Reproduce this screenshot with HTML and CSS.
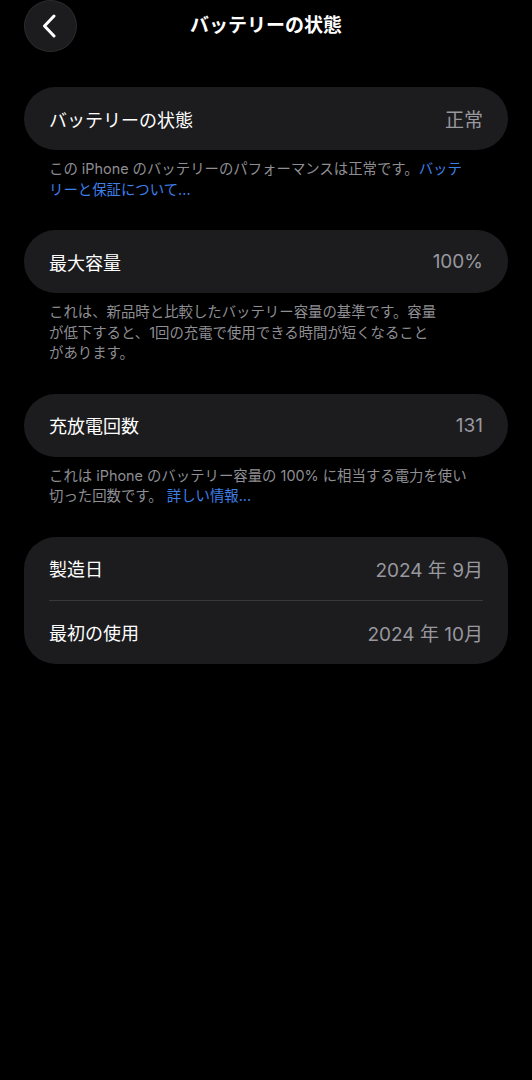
FILE: index.html
```html
<!DOCTYPE html>
<html lang="ja">
<head>
<meta charset="utf-8">
<title>バッテリーの状態</title>
<link rel="stylesheet" href="styles.css">
</head>
<body>
<div class="screen">
  <header class="nav">
    <div class="nav-side">
      <button class="back" aria-label="戻る">
        <svg width="14" height="24" viewBox="0 0 14 24" fill="none">
          <path d="M12 2 L2.5 12 L12 22" stroke="#fff" stroke-width="3" stroke-linecap="round" stroke-linejoin="round"/>
        </svg>
      </button>
    </div>
    <h1 class="title">バッテリーの状態</h1>
    <div class="nav-side"></div>
  </header>

  <main class="content">
    <section class="group">
      <div class="card">
        <div class="row"><span class="label">バッテリーの状態</span><span class="value">正常</span></div>
      </div>
      <p class="note">この iPhone のバッテリーのパフォーマンスは正常です。<a class="link">バッテ<br>リーと保証について...</a></p>
    </section>

    <section class="group">
      <div class="card">
        <div class="row"><span class="label">最大容量</span><span class="value">100%</span></div>
      </div>
      <p class="note">これは、新品時と比較したバッテリー容量の基準です。容量<br>が低下すると、1回の充電で使用できる時間が短くなること<br>があります。</p>
    </section>

    <section class="group">
      <div class="card">
        <div class="row"><span class="label">充放電回数</span><span class="value">131</span></div>
      </div>
      <p class="note">これは iPhone のバッテリー容量の 100% に相当する電力を使い<br>切った回数です。 <a class="link">詳しい情報...</a></p>
    </section>

    <section class="group">
      <div class="card card-list">
        <div class="row"><span class="label">製造日</span><span class="value">2024 年 9月</span></div>
        <div class="divider"></div>
        <div class="row"><span class="label">最初の使用</span><span class="value">2024 年 10月</span></div>
      </div>
    </section>
  </main>
</div>
</body>
</html>
```

FILE: styles.css
```css
* { box-sizing: border-box; }
html, body {
  margin: 0;
  padding: 0;
  background: #000;
}
body {
  font-family: Inter, "Noto Sans CJK JP", "Noto Sans", sans-serif;
  color: #fff;
  width: 532px;
  min-height: 1080px;
}
.screen {
  padding: 0 24px;
}
.nav {
  height: 52px;
  display: grid;
  grid-template-columns: 1fr auto 1fr;
  align-items: center;
}
.nav-side {
  display: flex;
  align-items: center;
}
.back {
  width: 53px;
  height: 52px;
  border-radius: 50%;
  background: #1c1c1e;
  border: 1px solid #2a2a2c;
  display: flex;
  align-items: center;
  justify-content: center;
  padding: 0 3px 0 0;
  margin: 0;
}
.title {
  margin: 0;
  font-size: 19px;
  font-weight: 700;
  line-height: 52px;
  letter-spacing: 0;
}
.content {
  padding-top: 35px;
  display: flex;
  flex-direction: column;
  gap: 30px;
}
.group {
  display: flex;
  flex-direction: column;
}
.card {
  background: #1c1c1e;
  border-radius: 32px;
  padding: 0 25px;
}
.row {
  height: 63px;
  display: flex;
  align-items: center;
  justify-content: space-between;
}
.label {
  font-size: 18px;
  font-weight: 400;
  color: #fff;
}
.value {
  font-size: 19px;
  font-weight: 400;
  color: #98989e;
}
.divider {
  height: 1px;
  background: #38383a;
}
.note {
  margin: 0;
  padding: 9px 25px 0;
  font-size: 14.4px;
  font-weight: 400;
  line-height: 20.5px;
  color: #8e8e93;
}
.link {
  color: #3f7fe8;
}
```
